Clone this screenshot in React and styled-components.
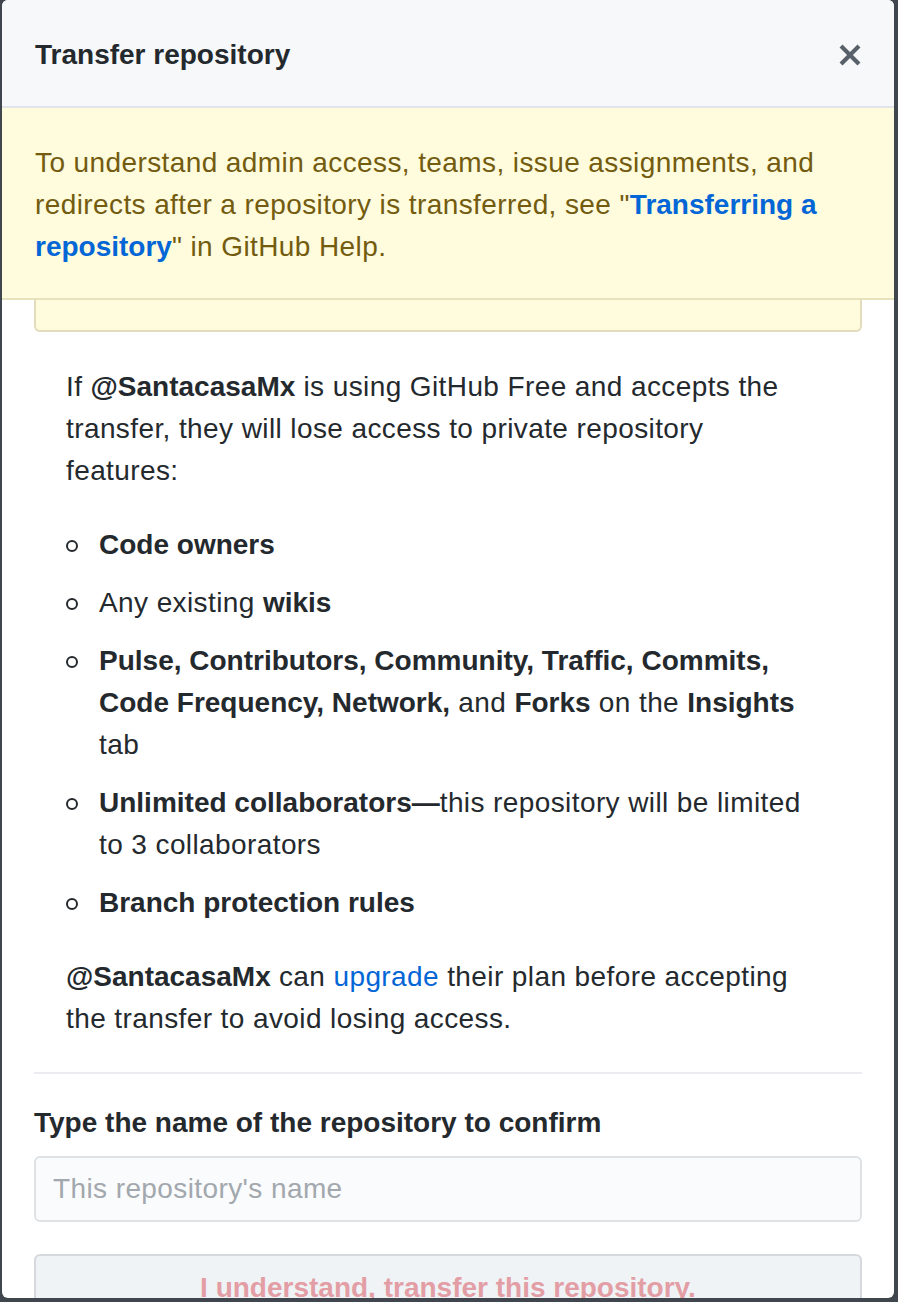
import React from "react";
import styled, { createGlobalStyle } from "styled-components";

const Global = createGlobalStyle`
  html, body { margin: 0; padding: 0; background: #3f464e; }
  body { font-family: "Liberation Sans", Arial, sans-serif; color: #24292e; }
  * { box-sizing: border-box; }
  strong { letter-spacing: 0; }
`;

const Modal = styled.div`
  margin: 0 4px 0 2px;
  height: 1298px;
  background: #ffffff;
  border-radius: 6px;
  overflow: hidden;
  display: flex;
  flex-direction: column;
`;

const Header = styled.div`
  display: flex;
  align-items: center;
  justify-content: space-between;
  padding: 34px 32px 30px 33px;
  background: #f6f8fa;
  border-bottom: 2px solid #e1e4e8;
`;

const Title = styled.h3`
  margin: 0;
  font-size: 28px;
  line-height: 42px;
  font-weight: 700;
  color: #24292e;
`;

const CloseButton = styled.button`
  border: 0;
  background: none;
  padding: 0;
  display: flex;
  color: #586069;
  cursor: pointer;
`;

const Banner = styled.div`
  padding: 34px 32px 30px 33px;
  background: #fffbdd;
  border-bottom: 2px solid #e8e1bd;
  color: #735c0f;
  font-size: 28px;
  line-height: 42px;
  letter-spacing: 0.4px;
`;

const StrongLink = styled.a`
  color: #0366d6;
  font-weight: 700;
  letter-spacing: 0;
  text-decoration: none;
`;

const Body = styled.div`
  padding: 0 32px;
  display: flex;
  flex-direction: column;
`;

const BoxTail = styled.div`
  height: 32px;
  background: #fffbdd;
  border: 2px solid #e2dcbc;
  border-top: 0;
  border-radius: 0 0 6px 6px;
`;

const Section = styled.div`
  padding: 0 48px 0 32px;
  font-size: 28px;
  line-height: 42px;
  letter-spacing: 0.4px;
`;

const Para = styled.p`
  margin: ${(p) => p.$mt || 0}px 0 0;
`;

const List = styled.ul`
  list-style: none;
  margin: 32px 0 0;
  padding: 0;
  display: flex;
  flex-direction: column;
  gap: 16px;
`;

const Item = styled.li`
  display: flex;
  align-items: flex-start;
`;

const Bullet = styled.span`
  flex: none;
  width: 12px;
  height: 12px;
  margin: 16px 21px 0 0;
  border: 2px solid #24292e;
  border-radius: 50%;
`;

const Link = styled.a`
  color: #0366d6;
  text-decoration: none;
`;

const Divider = styled.hr`
  margin: 32px 0 0;
  border: 0;
  height: 2px;
  background: #eaecef;
`;

const Label = styled.label`
  display: block;
  margin-top: 28px;
  font-size: 28px;
  line-height: 42px;
  font-weight: 700;
`;

const Input = styled.input`
  margin-top: 12px;
  width: 100%;
  height: 66px;
  padding: 0 17px;
  font-family: inherit;
  font-size: 28px;
  letter-spacing: 0.4px;
  color: #24292e;
  background: #fafbfc;
  border: 2px solid #dfe2e5;
  border-radius: 6px;
  outline: none;
  &::placeholder { color: #a2a8ae; }
`;

const DangerButton = styled.button`
  margin-top: 32px;
  width: 100%;
  padding: 12px 32px;
  font-family: inherit;
  font-size: 28px;
  line-height: 40px;
  font-weight: 600;
  color: #e39ea5;
  background: #eff3f6;
  border: 2px solid #d5d8dc;
  border-radius: 6px;
  text-align: center;
`;

const XIcon = () => (
  <svg width="24" height="32" viewBox="0 0 12 16" fill="currentColor" aria-hidden="true">
    <path d="M7.48 8l3.75 3.75-1.48 1.48L6 9.48l-3.75 3.75-1.48-1.48L4.52 8 .77 4.25l1.48-1.48L6 6.52l3.75-3.75 1.48 1.48L7.48 8z" />
  </svg>
);

export default function App() {
  return (
    <>
      <Global />
      <Modal>
        <Header>
          <Title>Transfer repository</Title>
          <CloseButton aria-label="Close">
            <XIcon />
          </CloseButton>
        </Header>
        <Banner>
          To understand admin access, teams, issue assignments, and redirects after a repository is
          transferred, see "<StrongLink href="#">Transferring a repository</StrongLink>" in GitHub Help.
        </Banner>
        <Body>
          <BoxTail />
          <Section>
            <Para $mt={34}>
              If <strong>@SantacasaMx</strong> is using GitHub Free and accepts the transfer, they will
              lose access to private repository features:
            </Para>
            <List>
              <Item>
                <Bullet />
                <span><strong>Code owners</strong></span>
              </Item>
              <Item>
                <Bullet />
                <span>Any existing <strong>wikis</strong></span>
              </Item>
              <Item>
                <Bullet />
                <span>
                  <strong>Pulse, Contributors, Community, Traffic, Commits, Code Frequency, Network,</strong>{" "}
                  and <strong>Forks</strong> on the <strong>Insights</strong> tab
                </span>
              </Item>
              <Item>
                <Bullet />
                <span>
                  <strong>Unlimited collaborators—</strong>this repository will be limited to 3 collaborators
                </span>
              </Item>
              <Item>
                <Bullet />
                <span><strong>Branch protection rules</strong></span>
              </Item>
            </List>
            <Para $mt={32}>
              <strong>@SantacasaMx</strong> can <Link href="#">upgrade</Link> their plan before accepting
              the transfer to avoid losing access.
            </Para>
          </Section>
          <Divider />
          <Label htmlFor="confirm">Type the name of the repository to confirm</Label>
          <Input id="confirm" placeholder="This repository's name" />
          <DangerButton disabled>I understand, transfer this repository.</DangerButton>
        </Body>
      </Modal>
    </>
  );
}
